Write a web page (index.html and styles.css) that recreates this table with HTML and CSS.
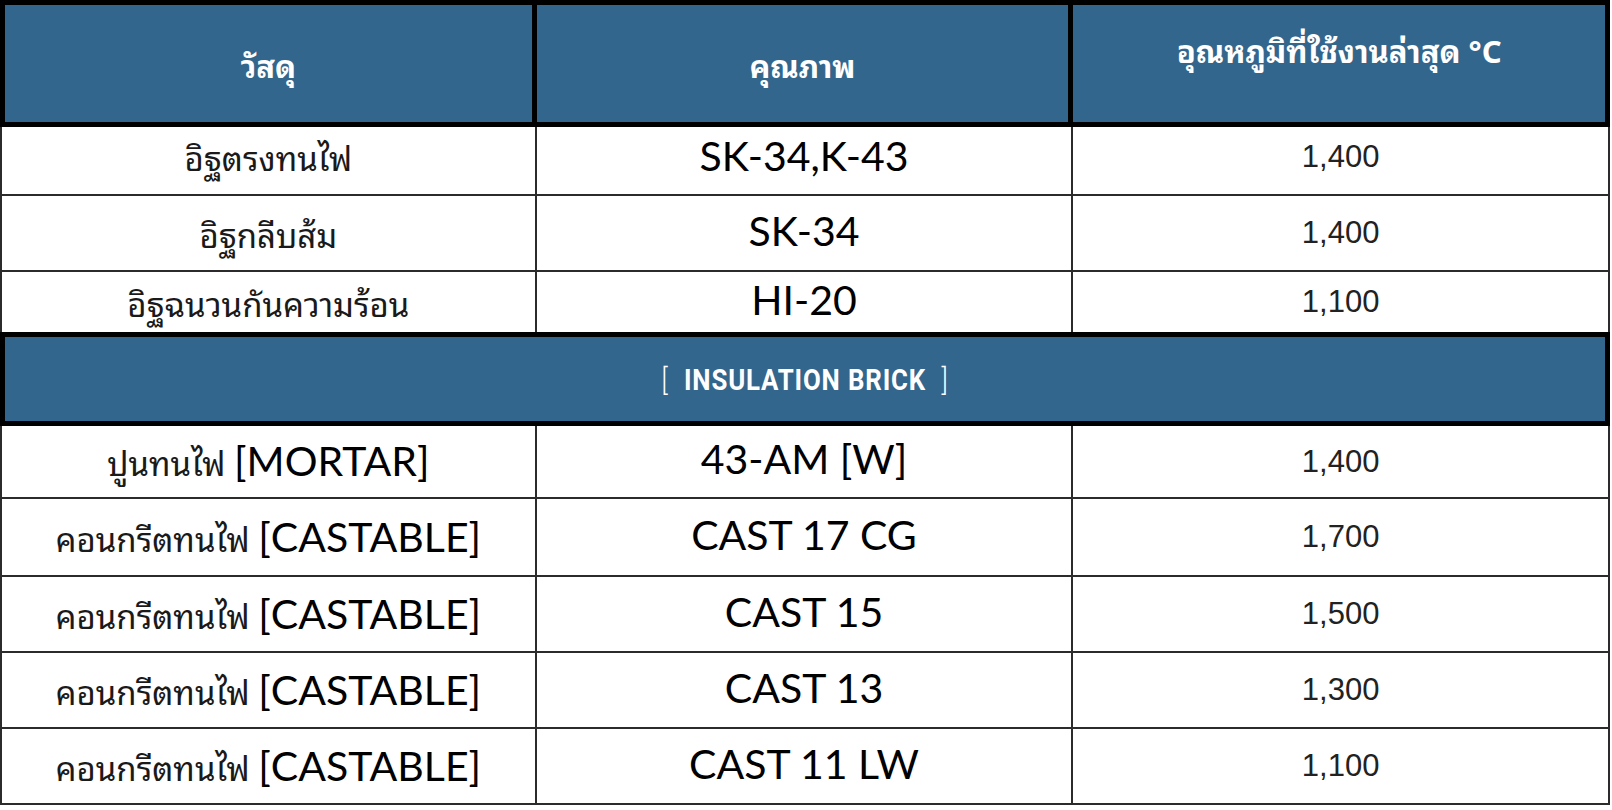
FILE: index.html
```html
<!DOCTYPE html>
<html lang="th">
<head>
<meta charset="utf-8">
<title>วัสดุทนไฟ</title>
<link rel="stylesheet" href="styles.css">
</head>
<body>
<table class="spec">
  <thead>
    <tr class="head-row">
      <th class="c1"><span class="h-low">วัสดุ</span></th>
      <th class="c2"><span class="h-low">คุณภาพ</span></th>
      <th class="c3"><span class="h-high">อุณหภูมิที่ใช้งานล่าสุด °C</span></th>
    </tr>
  </thead>
  <tbody>
    <tr class="r1">
      <td class="c1 th-txt">อิฐตรงทนไฟ</td>
      <td class="c2 grade">SK-34,K-43</td>
      <td class="c3 temp">1,400</td>
    </tr>
    <tr class="r2">
      <td class="c1 th-txt">อิฐกลีบส้ม</td>
      <td class="c2 grade">SK-34</td>
      <td class="c3 temp">1,400</td>
    </tr>
    <tr class="r3 before-band">
      <td class="c1 th-txt">อิฐฉนวนกันความร้อน</td>
      <td class="c2 grade">HI-20</td>
      <td class="c3 temp">1,100</td>
    </tr>
    <tr class="band-row">
      <td class="band" colspan="3"><span class="band-txt"><span class="br br-l">[</span>INSULATION BRICK<span class="br br-r">]</span></span></td>
    </tr>
    <tr class="r4">
      <td class="c1 th-txt">ปูนทนไฟ <span class="lat">[MORTAR]</span></td>
      <td class="c2 grade">43-AM [W]</td>
      <td class="c3 temp">1,400</td>
    </tr>
    <tr class="r5">
      <td class="c1 th-txt">คอนกรีตทนไฟ <span class="lat">[CASTABLE]</span></td>
      <td class="c2 grade">CAST 17 CG</td>
      <td class="c3 temp">1,700</td>
    </tr>
    <tr class="r6">
      <td class="c1 th-txt">คอนกรีตทนไฟ <span class="lat">[CASTABLE]</span></td>
      <td class="c2 grade">CAST 15</td>
      <td class="c3 temp">1,500</td>
    </tr>
    <tr class="r6">
      <td class="c1 th-txt">คอนกรีตทนไฟ <span class="lat">[CASTABLE]</span></td>
      <td class="c2 grade">CAST 13</td>
      <td class="c3 temp">1,300</td>
    </tr>
    <tr class="r6">
      <td class="c1 th-txt">คอนกรีตทนไฟ <span class="lat">[CASTABLE]</span></td>
      <td class="c2 grade">CAST 11 LW</td>
      <td class="c3 temp">1,100</td>
    </tr>
  </tbody>
</table>
</body>
</html>
```

FILE: styles.css
```css
html, body {
  margin: 0;
  padding: 0;
  background: #ffffff;
}

.spec {
  width: 1610px;
  table-layout: fixed;
  border-collapse: separate;
  border-spacing: 0;
  font-family: "Noto Sans Thai Looped", "Loma", "Garuda", "Waree", "Noto Sans Thai", sans-serif;
}

.spec th,
.spec td {
  box-sizing: border-box;
  padding: 0;
  text-align: center;
  vertical-align: middle;
}

/* header */
.head-row {
  height: 127px;
}

.head-row th {
  background: #33668c;
  color: #ffffff;
  font-weight: 700;
  font-size: 31px;
  border-top: 5px solid #000;
  border-bottom: 5px solid #000;
  border-right: 5px solid #000;
}

.head-row th.c1 {
  border-left: 5px solid #000;
}

.h-low {
  display: inline-block;
  padding-top: 0;
}

.h-high {
  display: inline-block;
  padding-bottom: 30px;
}

/* body rows */
.spec td {
  border-right: 2px solid #2b2b2b;
  border-bottom: 2px solid #2b2b2b;
}

.spec td.c1 {
  border-left: 2px solid #2b2b2b;
}

.r1 { height: 69px; }
.r2 { height: 76px; }
.r3 { height: 60px; }
.r4 { height: 73px; }
.r5 { height: 78px; }
.r6 { height: 76px; }

.r1 td {
  padding-bottom: 8px;
}

.before-band td {
  border-bottom: 0;
}

.th-txt {
  color: #1a1a1a;
  font-size: 33px;
  font-weight: 400;
}

.lat {
  font-family: "Lato", "Liberation Sans", sans-serif;
  font-size: 41px;
  color: #000;
}

.grade {
  font-family: "Lato", "Liberation Sans", sans-serif;
  font-size: 41px;
  color: #000;
}

.spec td.grade {
  padding-bottom: 6px;
}

.spec .r1 td.grade {
  padding-bottom: 10px;
}

.temp {
  font-family: "Liberation Sans", Arial, sans-serif;
  font-size: 31px;
  color: #222;
}

/* band */
.band-row {
  height: 94px;
}

.spec td.band {
  background: #33668c;
  color: #ffffff;
  border: 5px solid #000;
  font-family: "Roboto", "Liberation Sans", sans-serif;
  font-weight: 700;
  font-size: 30px;
  letter-spacing: 1px;
}

.band-txt {
  display: inline-block;
  transform: scaleX(0.86);
}

.br {
  font-weight: 300;
}

.br-l {
  margin-right: 18px;
}

.br-r {
  margin-left: 18px;
}
```
